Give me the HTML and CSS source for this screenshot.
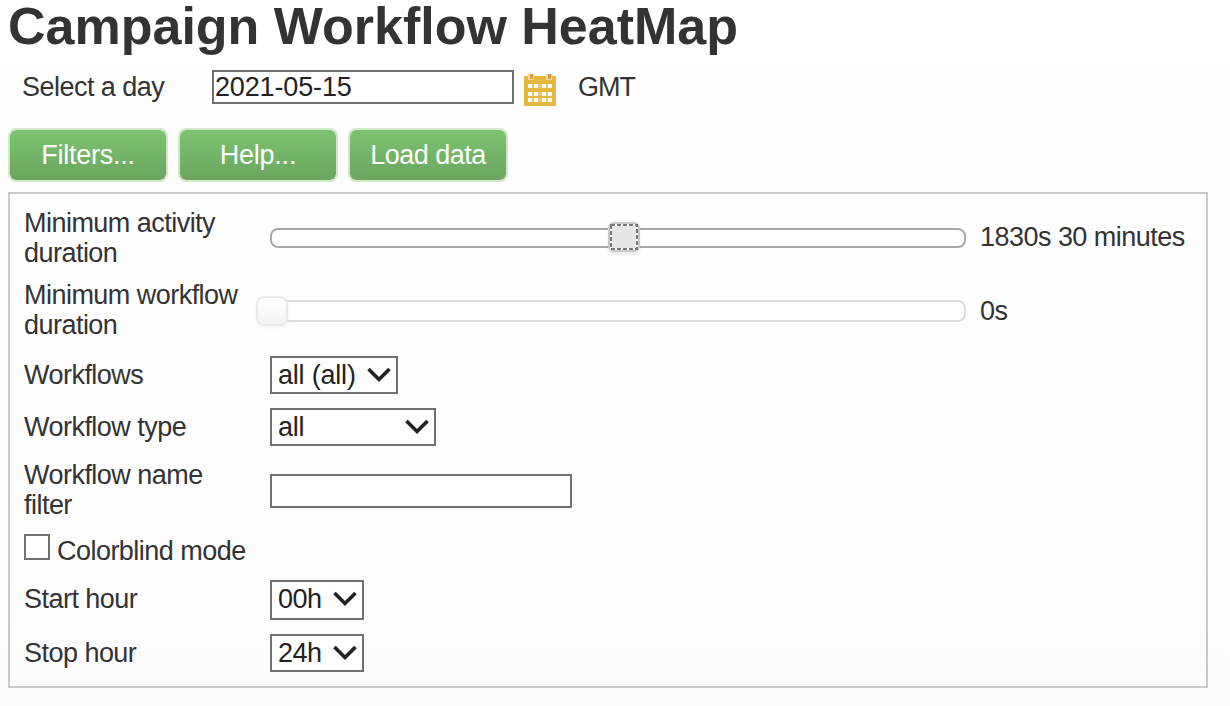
FILE: index.html
```html
<!DOCTYPE html>
<html lang="en">
<head>
<meta charset="utf-8">
<title>Campaign Workflow HeatMap</title>
<link rel="stylesheet" href="styles.css">
</head>
<body>
<h1 class="title">Campaign Workflow HeatMap</h1>
<div class="day-row">
  <label class="day-label" for="day">Select a day</label>
  <input class="text-input" id="day" type="text" value="2021-05-15">
  <svg class="calendar" width="32" height="34" viewBox="0 0 32 34" shape-rendering="crispEdges">
    <path fill="#e5b83f" d="M0 4h32v30H0z"/>
    <path fill="#f3d9a4" d="M4 2h6v6H4zM22 2h6v6h-6z"/>
    <path fill="#e39a3c" d="M6 2h3v5H6zM24 2h3v5h-3z"/>
    <path fill="#ecca6c" d="M8 12h16v18H8z"/>
    <path fill="#e5b83f" d="M8 16h16v4H8zM8 24h16v2H8z"/>
    <path fill="#fffdf5" d="M4 12h4v4H4zM10 12h4v4h-4zM18 12h4v4h-4zM24 12h4v4h-4zM4 20h4v4H4zM10 20h4v4h-4zM18 20h4v4h-4zM24 20h4v4h-4zM4 26h4v4H4zM10 26h4v4h-4zM18 26h4v4h-4zM24 26h4v4h-4z"/>
  </svg>
  <span class="zone">GMT</span>
</div>
<div class="buttons">
  <button class="button">Filters...</button>
  <button class="button">Help...</button>
  <button class="button button-load">Load data</button>
</div>
<div class="panel">
  <div class="row row-double">
    <span class="label">Minimum activity duration</span>
    <div class="slider slider-active">
      <span class="handle handle-active" style="left:336px"><svg class="focus-ring" width="28" height="26" viewBox="0 0 28 26"><path class="ring-base" d="M1 1h26v24H1z"/><path class="ring-dash" d="M1 1h26v24H1z"/></svg></span>
    </div>
    <span class="value">1830s 30 minutes</span>
  </div>
  <div class="row row-double row-workflow">
    <span class="label">Minimum workflow duration</span>
    <div class="slider"><span class="handle" style="left:-16px"></span></div>
    <span class="value">0s</span>
  </div>
  <div class="row row-select row-first-select">
    <span class="label">Workflows</span>
    <div class="select select-all"><span>all (all)</span><svg class="chevron" width="24" height="16" viewBox="0 0 24 16"><path d="M1.500 2 12 12.500 22.500 2"/></svg></div>
  </div>
  <div class="row row-select">
    <span class="label">Workflow type</span>
    <div class="select select-type"><span>all</span><svg class="chevron" width="24" height="16" viewBox="0 0 24 16"><path d="M1.500 2 12 12.500 22.500 2"/></svg></div>
  </div>
  <div class="row row-double row-name">
    <span class="label">Workflow name filter</span>
    <input class="text-input name-input" type="text" aria-label="Workflow name filter">
  </div>
  <label class="check-row"><input class="checkbox" type="checkbox"><span class="check-label">Colorblind mode</span></label>
  <div class="row row-start">
    <span class="label">Start hour</span>
    <div class="select select-hour"><span>00h</span><svg class="chevron" width="24" height="16" viewBox="0 0 24 16"><path d="M1.500 2 12 12.500 22.500 2"/></svg></div>
  </div>
  <div class="row row-select">
    <span class="label">Stop hour</span>
    <div class="select select-hour"><span>24h</span><svg class="chevron" width="24" height="16" viewBox="0 0 24 16"><path d="M1.500 2 12 12.500 22.500 2"/></svg></div>
  </div>
</div>
</body>
</html>
```
FILE: styles.css
```css
* { box-sizing: border-box; }
body {
  margin: 0;
  padding: 0 22px 0 8px;
  height: 706px;
  background: linear-gradient(#fff, #fcfcfc);
  color: #333;
  font: 27px/30px "Liberation Sans", Arial, sans-serif;
  letter-spacing: -0.53px;
}
.title {
  margin: 0;
  height: 70px;
  font-size: 52px;
  line-height: 52px;
  letter-spacing: 0;
}
.day-row { display: flex; height: 34px; align-items: center; padding-left: 14px; }
.day-label { width: 190px; }
.text-input {
  width: 302px;
  height: 34px;
  margin: 0;
  padding: 0 0 0 1px;
  border: 2px solid #707070;
  border-radius: 0;
  background: #fff;
  color: #222;
  font: inherit;
  letter-spacing: -0.15px;
}
.calendar { margin: 4px 22px 0 10px; }
.zone { letter-spacing: -1px; }
.buttons { display: flex; gap: 10px; margin-top: 24px; }
.button {
  width: 160px;
  height: 54px;
  padding: 0 0 1px;
  border: 2px solid #d5e7cb;
  border-radius: 8px;
  background: linear-gradient(#7dc470, #6ba560) padding-box;
  color: #fff;
  font: inherit;
  letter-spacing: -0.25px;
}
.button-load { letter-spacing: -0.5px; }
.panel {
  width: 1200px;
  height: 496px;
  margin-top: 10px;
  padding: 14px 0 0 14px;
  border: 2px solid #cacaca;
}
.row { display: grid; grid-template-columns: 220px 696px 1fr; column-gap: 26px; align-items: center; }
.row .value { margin: -2px 0 0 -12px; white-space: nowrap; }
.row-double { height: 60px; }
.row-workflow { margin-top: 12px; }
.row-workflow .slider { height: 22px; margin-top: 2px; }
.row-workflow .value { margin-top: 2px; }
.row-select { height: 38px; margin-top: 14px; }
.row-first-select { margin-top: 16px; }
.row-name { margin-top: 14px; }
.name-input { margin-top: 2px; }
.row-start { height: 40px; margin-top: 16px; }
.row-start .label, .row-start .select { padding-bottom: 2px; }
.slider {
  position: relative;
  height: 20px;
  border: 2px solid #ddd;
  border-radius: 8px;
  background: #fff;
}
.slider-active { border-color: #a8a8a8; }
.handle {
  position: absolute;
  top: -6px;
  width: 32px;
  height: 30px;
  border: 2px solid #eaeaea;
  border-radius: 8px;
  background: linear-gradient(#fff, #f3f3f3);
  box-shadow: 0 2px 3px #0000000a;
}
.handle-active {
  top: -8px;
  border-color: #c8c8c8;
  border-radius: 6px;
  background: #e6e6e6;
  box-shadow: 0 3px 3px #00000014;
}
.focus-ring { display: block; fill: none; stroke-width: 2; }
.ring-base { stroke: #fff; }
.ring-dash { stroke: #777; stroke-dasharray: 4 2; }
.select {
  display: flex;
  align-items: center;
  justify-content: space-between;
  height: 100%;
  padding: 0 5px 0 6px;
  border: 2px solid #707070;
  background: #fff;
  color: #222;
}
.select-all { width: 128px; letter-spacing: -0.2px; }
.select-type { width: 166px; letter-spacing: -0.2px; }
.select-hour { width: 94px; }
.chevron { flex: none; fill: none; stroke: #222; stroke-width: 3.6; }
.check-row { display: flex; height: 30px; margin-top: 14px; }
.checkbox {
  appearance: none;
  width: 26px;
  height: 26px;
  margin: 0 7px 0 0;
  border: 2px solid #707070;
  background: #fff;
}
.check-label { padding-top: 2px; }
```
